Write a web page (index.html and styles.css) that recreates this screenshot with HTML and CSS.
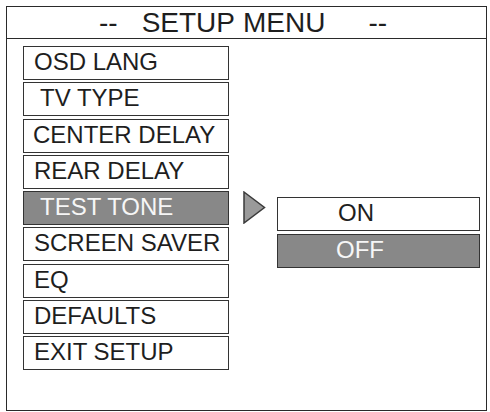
FILE: index.html
```html
<!DOCTYPE html>
<html>
<head>
<meta charset="utf-8">
<link rel="stylesheet" href="styles.css">
</head>
<body>
<div class="panel">
  <div class="title">
    <span class="dash">--</span>
    <span class="word">SETUP</span>
    <span class="word">MENU</span>
    <span class="dash dash-end">--</span>
  </div>
  <div class="content">
    <ul class="menu">
      <li class="item">OSD LANG</li>
      <li class="item pad">TV TYPE</li>
      <li class="item tight">CENTER DELAY</li>
      <li class="item">REAR DELAY</li>
      <li class="item pad selected">TEST TONE</li>
      <li class="item">SCREEN SAVER</li>
      <li class="item">EQ</li>
      <li class="item">DEFAULTS</li>
      <li class="item">EXIT SETUP</li>
    </ul>
    <svg class="pointer" width="23" height="33" viewBox="0 0 23 33">
      <polygon points="1,1 21.5,16.5 1,32" fill="#9a9a9a" stroke="#3a3a3a" stroke-width="1.5" stroke-linejoin="miter"/>
    </svg>
    <ul class="options">
      <li class="option on">ON</li>
      <li class="option off selected">OFF</li>
    </ul>
  </div>
</div>
</body>
</html>
```
FILE: styles.css
```css
html, body {
  margin: 0;
  padding: 0;
  background: #ffffff;
}

body {
  font-family: "Liberation Sans", Arial, sans-serif;
  color: #1e1e1e;
}

.panel {
  margin: 6px 0 0 6px;
  width: 479px;
  height: 403px;
  border: 1px solid #2a2a2a;
  box-sizing: content-box;
}

.title {
  height: 31px;
  border-bottom: 1px solid #2a2a2a;
  display: flex;
  align-items: flex-start;
  font-size: 28px;
  line-height: 31px;
  padding-left: 92px;
}

.title .word {
  margin-left: 8px;
}

.title .dash {
  margin-right: 16px;
}

.title .dash-end {
  margin-left: 43px;
  margin-right: 0;
}

.content {
  display: flex;
  align-items: flex-start;
  padding: 7px 0 0 16px;
}

.menu,
.options {
  list-style: none;
  margin: 0;
  padding: 0;
  display: flex;
  flex-direction: column;
}

.menu {
  width: 206px;
  gap: 2.25px;
}

.item,
.option {
  height: 34px;
  box-sizing: border-box;
  border: 1.5px solid #333333;
  font-size: 24px;
  line-height: 30px;
  white-space: pre;
  background: #ffffff;
}

.item {
  padding-left: 10px;
}

.item.pad {
  padding-left: 16px;
}

.item.tight {
  padding-left: 9px;
}

.selected {
  background: #888888;
  color: #f6f6f6;
}

.pointer {
  margin: 145px 0 0 14px;
  flex: none;
}

.options {
  width: 203px;
  gap: 3px;
  margin: 151px 0 0 11px;
}

.option.on {
  padding-left: 60px;
}

.option.off {
  padding-left: 58px;
}
```
